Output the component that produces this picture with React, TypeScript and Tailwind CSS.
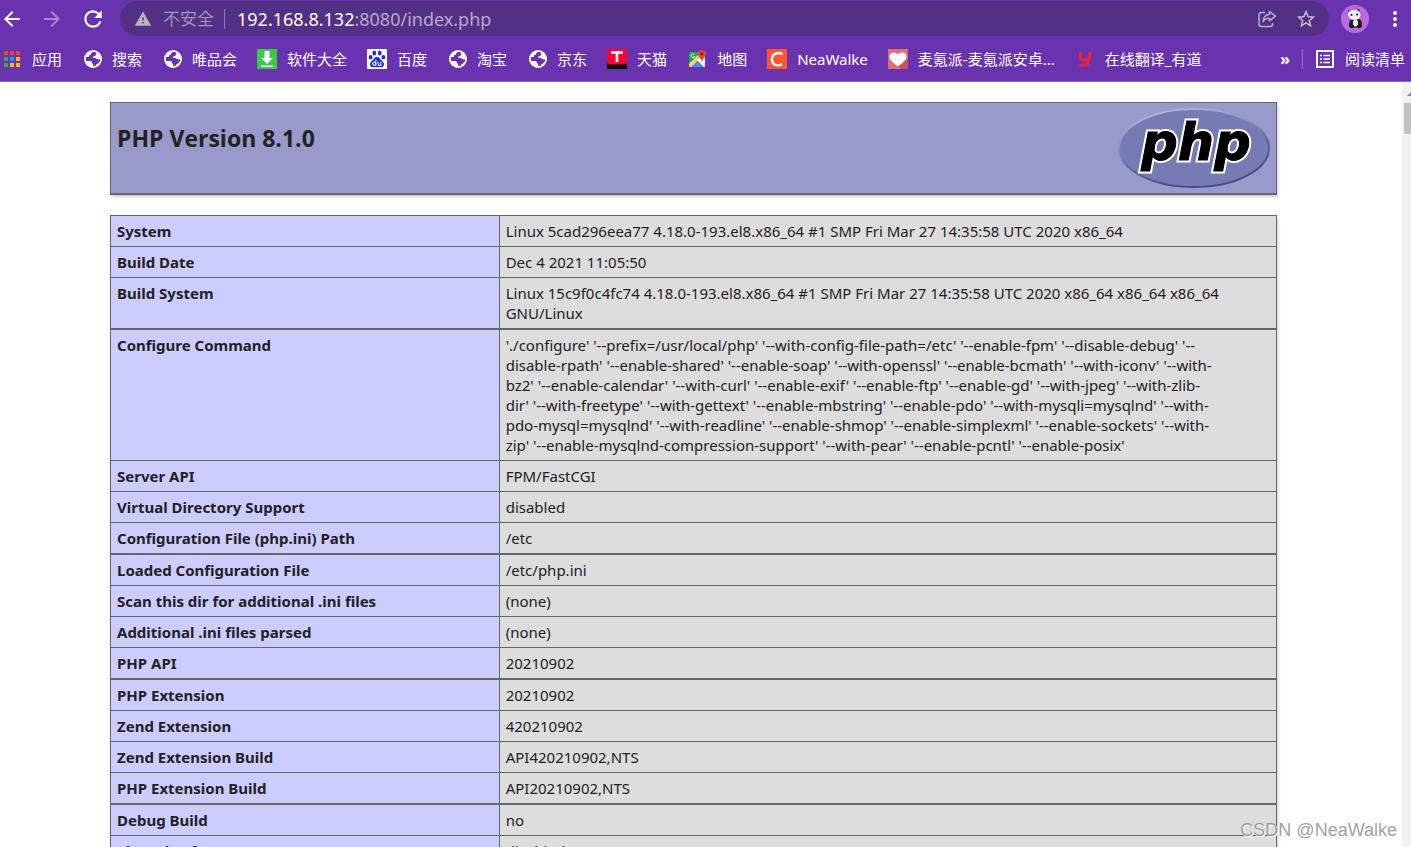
import React from "react";
import {
  MdArrowBack,
  MdArrowForward,
  MdMoreVert,
  MdRefresh,
  MdStarBorder,
  MdWarning,
} from "react-icons/md";

const configureCommand = `'./configure' '--prefix=/usr/local/php' '--with-config-file-path=/etc' '--enable-fpm' '--disable-debug' '--
disable-rpath' '--enable-shared' '--enable-soap' '--with-openssl' '--enable-bcmath' '--with-iconv' '--with-
bz2' '--enable-calendar' '--with-curl' '--enable-exif' '--enable-ftp' '--enable-gd' '--with-jpeg' '--with-zlib-
dir' '--with-freetype' '--with-gettext' '--enable-mbstring' '--enable-pdo' '--with-mysqli=mysqlnd' '--with-
pdo-mysql=mysqlnd' '--with-readline' '--enable-shmop' '--enable-simplexml' '--enable-sockets' '--with-
zip' '--enable-mysqlnd-compression-support' '--with-pear' '--enable-pcntl' '--enable-posix'`;

const rows = [
  { label: "System", value: "Linux 5cad296eea77 4.18.0-193.el8.x86_64 #1 SMP Fri Mar 27 14:35:58 UTC 2020 x86_64" },
  { label: "Build Date", value: "Dec 4 2021 11:05:50" },
  {
    label: "Build System",
    value: "Linux 15c9f0c4fc74 4.18.0-193.el8.x86_64 #1 SMP Fri Mar 27 14:35:58 UTC 2020 x86_64 x86_64 x86_64 GNU/Linux",
    thick: true,
  },
  { label: "Configure Command", value: configureCommand },
  { label: "Server API", value: "FPM/FastCGI" },
  { label: "Virtual Directory Support", value: "disabled" },
  { label: "Configuration File (php.ini) Path", value: "/etc", thick: true },
  { label: "Loaded Configuration File", value: "/etc/php.ini" },
  { label: "Scan this dir for additional .ini files", value: "(none)" },
  { label: "Additional .ini files parsed", value: "(none)" },
  { label: "PHP API", value: "20210902", thick: true },
  { label: "PHP Extension", value: "20210902" },
  { label: "Zend Extension", value: "420210902" },
  { label: "Zend Extension Build", value: "API420210902,NTS" },
  { label: "PHP Extension Build", value: "API20210902,NTS", thick: true },
  { label: "Debug Build", value: "no" },
  { label: "Thread Safety", value: "disabled" },
];

const AppsIcon = () => {
  const colors = ["#ea4335", "#ea4335", "#ea4335", "#34a853", "#1a9cff", "#fbbc05", "#34a853", "#fbbc05", "#fbbc05"];
  return (
    <svg viewBox="0 0 20 20" className={styles.icon}>
      {colors.map((color, i) => (
        <rect key={i} x={2 + (i % 3) * 6} y={2 + Math.floor(i / 3) * 6} width="4" height="4" fill={color} />
      ))}
    </svg>
  );
};

const GlobeIcon = () => (
  <svg viewBox="0 0 20 20" className={styles.icon}>
    <circle cx="11" cy="10" r="9" fill="#fff" />
    <path
      d="M12.500 2.800c-2.200.1-3.500 1.100-3.500 2.700-1.500.2-2.200 1.200-2 2.500H4.100c-.4 1.500-.3 2.900.1 4h3.600c1.500 0 2.100.6 2.100 1.800v.8c.9 0 1.300.5 1.300 1.300v1.200c1 .1 1.900 0 2.700-.3v-1.400c1.300 0 1.900-.6 2.100-1.500.9-.2 1.600-.7 1.900-1.700.2-.8.300-1.600.1-2.300-.9.700-1.800.8-2.600.2-.9-.8-1.500-1.200-2.900-1.200h-1.600c0-1.300.8-1.900 2.400-1.900.2-1 .6-1.600 1.400-2.100-.7-.9-1.300-1.700-2.200-2.100z"
      fill="#6933b0"
    />
  </svg>
);

const DownloadIcon = () => (
  <svg viewBox="0 0 20 20" className={styles.icon}>
    <rect width="20" height="20" fill="#3dc84a" />
    <path d="M7.500 2h5v7h3.300L10 15 4.200 9h3.300z" fill="#fff" />
    <rect x="4" y="16.500" width="12" height="1.500" fill="#fff" />
  </svg>
);

const BaiduIcon = () => (
  <svg viewBox="0 0 20 20" className={styles.icon}>
    <rect width="20" height="20" rx="1" fill="#fff" />
    <g fill="#2330d8">
      <ellipse cx="7.300" cy="4" rx="1.900" ry="2.500" />
      <ellipse cx="12.700" cy="4" rx="1.900" ry="2.500" />
      <ellipse cx="3.600" cy="8.200" rx="1.900" ry="2.300" />
      <ellipse cx="16.400" cy="8.200" rx="1.900" ry="2.300" />
      <path d="M10 8c2.500 0 3 2.200 4.700 3.600 2.300 1.900 2.800 3.500 1.900 5.300-1 1.900-3.400 1.400-6.600 1.400s-5.600.5-6.600-1.400c-.9-1.800-.4-3.400 1.900-5.300C7 10.200 7.500 8 10 8z" />
    </g>
    <path d="M8.800 10.800v5.700M8.800 13.300H7.200a1.500 1.500 0 000 3h1.600M11 12.800v2.300c0 1 .5 1.400 1.300 1.400h1.500v-3.700" fill="none" stroke="#fff" strokeWidth="1.100" />
  </svg>
);

const TmallIcon = () => (
  <svg viewBox="0 0 20 20" className={styles.icon}>
    <rect width="20" height="20" fill="#000" />
    <path d="M0 0h20v13l-2 2.500H2L0 13z" fill="#ff0036" />
    <path d="M4 3.500h12M10 3.500V13" stroke="#fff" strokeWidth="2.600" fill="none" />
  </svg>
);

const MapsIcon = () => (
  <svg viewBox="0 0 20 20" className={styles.icon}>
    <path d="M2 3h16v15H2z" fill="#e8e8e8" />
    <path d="M2 3h12L2 15z" fill="#23a455" />
    <path d="M4 18l7-7 6 7z" fill="#4a86f5" />
    <path d="M2 16L14 4l2 2L4 18H2z" fill="#fdd240" />
    <path d="M10 11l1.500-1.500L18 16v2h-1z" fill="#fff" />
    <path d="M7.500 5.500a2 2 0 10.400 2H6.300" fill="none" stroke="#fff" strokeWidth="0.800" />
    <path d="M15 1a4 4 0 00-4 4c0 3 3.500 4 4 8 .5-4 4-5 4-8a4 4 0 00-4-4z" fill="#e04537" />
    <circle cx="15" cy="5" r="1.400" fill="#7b231d" />
  </svg>
);

const CsdnIcon = () => (
  <svg viewBox="0 0 20 20" className={styles.icon}>
    <rect width="20" height="20" fill="#fc5531" />
    <path d="M15.500 5.200C11 2.500 5 4.500 5 10.500c0 6 5.500 7 10 4.700" fill="none" stroke="#fff" strokeWidth="2.400" />
  </svg>
);

const HeartIcon = () => (
  <svg viewBox="0 0 20 20" className={styles.icon}>
    <rect width="20" height="20" fill="#df6d7a" />
    <path d="M10 17l8-7 2 2v8h-7z" fill="#c9505f" />
    <path d="M10 17.500C6 14.500 1.500 11.500 1.500 7.800 1.500 3.200 7.500 2 10 5.800 12.500 2 18.500 3.200 18.500 7.800c0 3.700-4.500 6.700-8.500 9.700z" fill="#fff" />
  </svg>
);

const YoudaoIcon = () => (
  <svg viewBox="0 0 20 20" className={styles.icon}>
    <path d="M6 3L5.200 8.500c-.2 1.700.5 2.500 2 2.500h5.500M15 3l-1.800 10.500c-.4 2-1.500 2.800-3.300 2.800H4.500" fill="none" stroke="#f0222b" strokeWidth="3" />
  </svg>
);

const ShareIcon = () => (
  <svg viewBox="0 0 20 20" fill="none" stroke="currentColor" strokeWidth="1.500" strokeLinejoin="round" className={styles.icon}>
    <path d="M8 3.500H4.200a2.200 2.200 0 00-2.200 2.200v9.600a2.200 2.200 0 002.200 2.200h9.100a2.200 2.200 0 002.200-2.200V14" />
    <path d="M12.500 2.500l5.800 4.700-5.800 4.700V9.200c-3 0-5 1-6.500 3.500.3-4 2.500-7 6.500-7.500z" />
  </svg>
);

const PandaAvatar = () => (
  <svg viewBox="0 0 28 28" className="size-7">
    <circle cx="14" cy="14" r="14" fill="#b869e0" />
    <path d="M9 15c-1 3-1.500 5-.5 7.500h12c1-3 .5-6-1.500-8.500z" fill="#222" />
    <ellipse cx="14.500" cy="18" rx="2.500" ry="3.500" fill="#e8eee8" />
    <circle cx="8.200" cy="6.500" r="1.300" fill="#333" />
    <circle cx="17.500" cy="5.500" r="1.300" fill="#333" />
    <path d="M7 9c0-3 3-4 6.500-4S19.500 7 19.500 10s-2.500 4.800-6 4.800S7 12.500 7 9z" fill="#eef2ec" />
    <ellipse cx="10.500" cy="10" rx="1.200" ry="0.900" fill="#333" />
    <ellipse cx="16" cy="9.500" rx="1.200" ry="0.900" fill="#333" />
    <circle cx="11" cy="21.500" r="1.800" fill="#111" />
    <circle cx="18" cy="21.500" r="1.800" fill="#111" />
  </svg>
);

const ReadingListIcon = () => (
  <svg viewBox="0 0 20 20" fill="none" stroke="#fff" className={styles.icon}>
    <rect x="2" y="2" width="16" height="16" strokeWidth="2" />
    <path d="M5 6.500h2M5 10h2M5 13.500h2M8.500 6.500H15M8.500 10H15M8.500 13.500H15" strokeWidth="1.500" />
  </svg>
);

const PhpLogo = () => (
  <svg viewBox="0 0 152 80" className="h-20 w-[152px] shrink-0">
    <defs>
      <linearGradient id="rim" x1="0.3" y1="0" x2="0.7" y2="1">
        <stop offset="0.05" stopColor="#aeb0dc" />
        <stop offset="0.4" stopColor="#8286bd" />
        <stop offset="0.6" stopColor="#5c609f" />
        <stop offset="0.9" stopColor="#484c89" />
      </linearGradient>
    </defs>
    <ellipse cx="76" cy="40" rx="75" ry="39" fill="#777bb3" stroke="url(#rim)" strokeWidth="2" />
    <g textAnchor="middle" className={styles.logoText}>
      <text x="78" y="52" className="fill-white stroke-white stroke-[5px]">
        php
      </text>
      <text x="78" y="52" className="fill-black stroke-black stroke-[1px]">
        php
      </text>
    </g>
  </svg>
);

const bookmarks = [
  { title: "应用", icon: <AppsIcon /> },
  { title: "搜索", icon: <GlobeIcon /> },
  { title: "唯品会", icon: <GlobeIcon /> },
  { title: "软件大全", icon: <DownloadIcon /> },
  { title: "百度", icon: <BaiduIcon /> },
  { title: "淘宝", icon: <GlobeIcon /> },
  { title: "京东", icon: <GlobeIcon /> },
  { title: "天猫", icon: <TmallIcon /> },
  { title: "地图", icon: <MapsIcon /> },
  { title: "NeaWalke", icon: <CsdnIcon /> },
  { title: "麦氪派-麦氪派安卓...", icon: <HeartIcon /> },
  { title: "在线翻译_有道", icon: <YoudaoIcon /> },
];

const Toolbar = () => (
  <div className="flex h-9 items-center pt-px">
    <button aria-label="Back" className="text-white">
      <MdArrowBack size={24} />
    </button>
    <button aria-label="Forward" className="ml-4 text-[#a684d3]">
      <MdArrowForward size={24} />
    </button>
    <button aria-label="Reload" className="ml-4 text-white">
      <MdRefresh size={26} />
    </button>
    <div className="ml-3.5 flex h-[35px] flex-1 items-center rounded-full bg-[#532f85] pr-3 pl-3.5">
      <MdWarning size={18} className="text-[#b9b3bf]" />
      <span className="ml-[11px] text-[17px] text-[#a394ba]">不安全</span>
      <span className="mr-3 ml-2.5 h-5 w-px bg-[#8f78b0]" />
      <div className={styles.address}>
        <span className="text-white">192.168.8.132</span>:8080/index.php
      </div>
      <button aria-label="Share" className="ml-auto text-[#b9b0c6]">
        <ShareIcon />
      </button>
      <button aria-label="Bookmark this page" className="ml-[18px] text-[#c9c2d2]">
        <MdStarBorder size={22} />
      </button>
    </div>
    <button aria-label="Profile" className="ml-3">
      <PandaAvatar />
    </button>
    <button aria-label="Menu" className="mr-1 ml-3.5 text-white">
      <MdMoreVert size={24} />
    </button>
  </div>
);

const BookmarksBar = () => (
  <nav className="flex h-[45px] items-center pt-px text-[15px] whitespace-nowrap text-white">
    <div className="ml-0.5 flex gap-5">
      {bookmarks.map((bookmark) => (
        <a key={bookmark.title} href="#" className={styles.bookmark}>
          {bookmark.icon}
          {bookmark.title}
        </a>
      ))}
    </div>
    <button aria-label="More bookmarks" className="ml-auto text-base leading-5 font-bold">
      »
    </button>
    <span className="mx-3 h-5 w-px bg-[#9470c8]" />
    <button className="mr-1.5 flex items-center gap-2.5">
      <ReadingListIcon />
      阅读清单
    </button>
  </nav>
);

const App = () => {
  return (
    <div className={styles.window}>
      <header className="shrink-0 border-b border-[#8f62cb] bg-[#6933b0]">
        <Toolbar />
        <BookmarksBar />
      </header>
      <div className="flex min-h-0 flex-1">
        <main className="min-w-0 flex-1 overflow-hidden pt-5 pr-[125px] pl-[110px]">
          <div className={styles.banner}>
            <h1 className={styles.title}>PHP Version 8.1.0</h1>
            <PhpLogo />
          </div>
          <table className={styles.table}>
            <tbody>
              {rows.map((row) => (
                <tr key={row.label}>
                  <th scope="row" className={`${styles.label} ${row.thick ? "border-b-2" : "border-b"}`}>
                    {row.label}
                  </th>
                  <td className={`${styles.value} ${row.thick ? "border-b-2" : "border-b"}`}>{row.value}</td>
                </tr>
              ))}
            </tbody>
          </table>
        </main>
        {/* scrollbar */}
        <div className="flex w-[9px] shrink-0 flex-col items-end overflow-hidden bg-[#f1f1f1] pt-2.5">
          <svg viewBox="0 0 4 4" className="size-1">
            <path d="M0 4l4-4v4z" fill="#888" />
          </svg>
          <div className="mt-[7px] h-[31px] w-[7px] bg-[#c1c1c1]" />
        </div>
      </div>
      <p className={styles.watermark}>CSDN @NeaWalke</p>
    </div>
  );
};

export default App;

const styles = {
  window:
    "relative flex h-screen flex-col overflow-hidden bg-white font-['Noto_Sans','Noto_Sans_CJK_SC',sans-serif] text-[#222]",
  icon: "size-5 shrink-0",
  address: "text-[18px] leading-6 text-[#b7a9cb]",
  bookmark: "flex items-center gap-2.5",
  banner:
    "flex items-start justify-between border border-b-2 border-[#666] bg-[#9999cc] px-1.5 py-[5px] shadow-[1px_2px_3px_#ccc]",
  title: "pt-3.5 font-['Open_Sans',sans-serif] text-[23px] leading-8 font-bold",
  logoText: "font-['DejaVu_Sans',sans-serif] text-[51px] font-bold italic",
  table:
    "mt-5 w-full border-separate border-spacing-0 border-t border-l border-[#666] text-[15px] leading-5 shadow-[1px_2px_3px_#ccc]",
  label: "w-1/3 border-r border-[#666] bg-[#ccccff] px-1.5 py-[5px] text-left align-top font-bold",
  value: "border-r border-[#666] bg-[#dddddd] px-1.5 py-[5px] align-top whitespace-pre-line",
  watermark:
    "absolute right-3.5 bottom-[3px] font-['Liberation_Sans',sans-serif] text-[18px] text-[#888]/80 [text-shadow:1px_1px_0_#fff]",
};
